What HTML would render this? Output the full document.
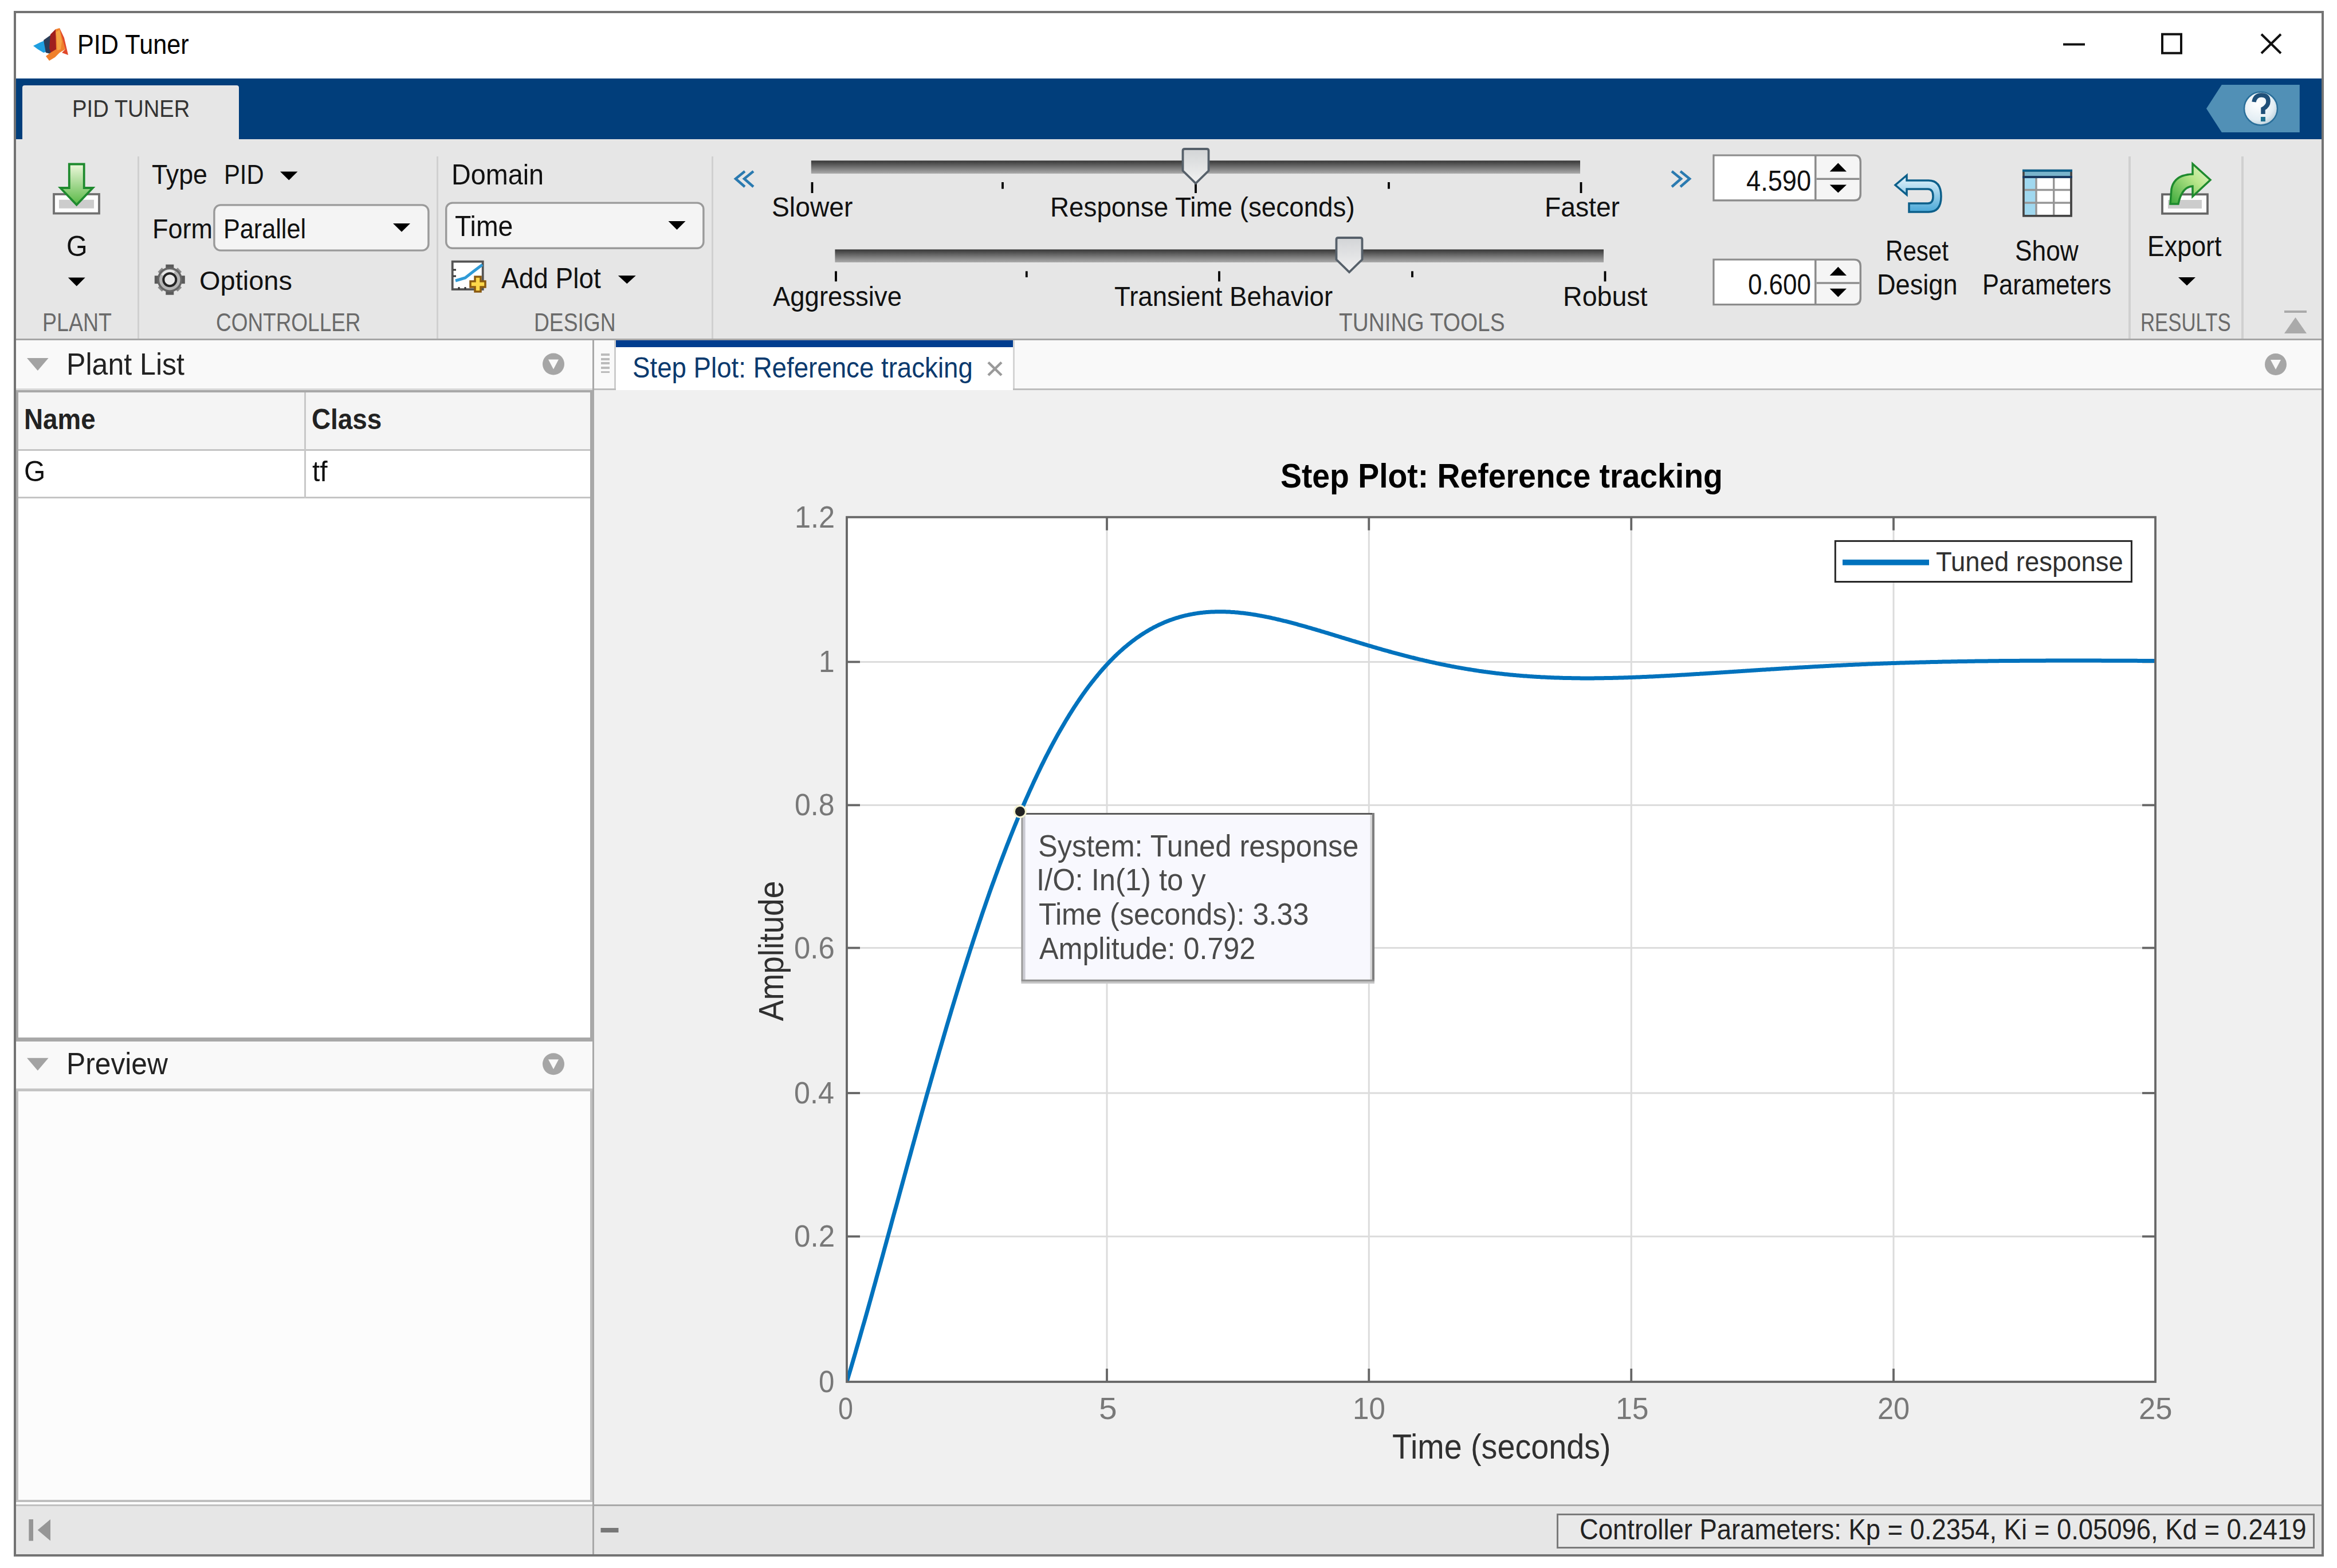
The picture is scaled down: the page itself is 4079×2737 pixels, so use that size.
<!DOCTYPE html>
<html><head><meta charset="utf-8"><style>
html,body{margin:0;padding:0;background:#fff;width:4079px;height:2737px;overflow:hidden;position:relative}
.r{position:absolute}
.t{position:absolute;white-space:pre;line-height:1;font-family:"Liberation Sans",sans-serif;transform-origin:0 0}
svg{position:absolute;left:0;top:0}
</style></head><body>
<div class="r" style="left:24.0px;top:19.0px;width:4032.0px;height:2698.0px;background:#737373;"></div><div class="r" style="left:28.0px;top:23.0px;width:4024.0px;height:114.0px;background:#ffffff;"></div><div class="r" style="left:28.0px;top:137.0px;width:4024.0px;height:105.5px;background:#013e7b;"></div><div class="r" style="left:38.5px;top:148.5px;width:378.5px;height:94.5px;background:#e6e6e6;border-radius:4px 4px 0 0"></div><div class="r" style="left:28.0px;top:242.5px;width:4024.0px;height:348.5px;background:#e6e6e6;"></div><div class="r" style="left:28.0px;top:591.0px;width:4024.0px;height:3.2px;background:#a6a6a6;"></div><div class="r" style="left:239.8px;top:272.5px;width:3.4px;height:318.5px;background:#d0d0d0;"></div><div class="r" style="left:761.8px;top:272.5px;width:3.4px;height:318.5px;background:#d0d0d0;"></div><div class="r" style="left:1241.8px;top:272.5px;width:3.4px;height:318.5px;background:#d0d0d0;"></div><div class="r" style="left:3715.3px;top:272.5px;width:3.4px;height:318.5px;background:#d0d0d0;"></div><div class="r" style="left:3912.3px;top:272.5px;width:3.4px;height:318.5px;background:#d0d0d0;"></div><div class="r" style="left:28.0px;top:594.2px;width:4024.0px;height:2118.8px;background:#f0f0f0;"></div><div class="r" style="left:28.0px;top:594.2px;width:1006.0px;height:83.8px;background:#f9f9f9;"></div><div class="r" style="left:28.0px;top:678.0px;width:1006.0px;height:3.0px;background:#d9d9d9;"></div><div class="r" style="left:28.0px;top:681.0px;width:1006.0px;height:1137.0px;background:#a8a8a8;"></div><div class="r" style="left:31.8px;top:684.8px;width:998.2px;height:1126.2px;background:#ffffff;"></div><div class="r" style="left:31.8px;top:684.8px;width:998.2px;height:98.8px;background:#f4f4f4;"></div><div class="r" style="left:31.8px;top:783.6px;width:998.2px;height:3.4px;background:#c4c4c4;"></div><div class="r" style="left:31.8px;top:866.5px;width:998.2px;height:3.5px;background:#c4c4c4;"></div><div class="r" style="left:530.5px;top:684.8px;width:3.3px;height:185.2px;background:#c8c8c8;"></div><div class="r" style="left:28.0px;top:1818.0px;width:1006.0px;height:82.0px;background:#f9f9f9;"></div><div class="r" style="left:28.0px;top:1900.0px;width:1006.0px;height:5.0px;background:#c4c4c4;"></div><div class="r" style="left:28.0px;top:1905.0px;width:1006.0px;height:716.8px;background:#bfbfbf;"></div><div class="r" style="left:31.8px;top:1905.0px;width:998.2px;height:713.0px;background:#fcfcfc;"></div><div class="r" style="left:28.0px;top:2621.8px;width:1006.0px;height:4.2px;background:#ffffff;"></div><div class="r" style="left:1034.0px;top:2626.0px;width:3018.0px;height:3.0px;background:#a8a8a8;"></div><div class="r" style="left:28.0px;top:2626.0px;width:1006.0px;height:3.0px;background:#c0c0c0;"></div><div class="r" style="left:28.0px;top:2629.0px;width:4024.0px;height:84.0px;background:#e6e6e6;"></div><div class="r" style="left:1034.0px;top:594.2px;width:3.4px;height:2118.8px;background:#a8a8a8;"></div><div class="r" style="left:1037.4px;top:594.2px;width:3014.6px;height:83.8px;background:#f9f9f9;"></div><div class="r" style="left:1037.4px;top:678.0px;width:3014.6px;height:3.0px;background:#bdbdbd;"></div><div class="r" style="left:1072.0px;top:594.2px;width:3.0px;height:83.8px;background:#cccccc;"></div><div class="r" style="left:1049.0px;top:617.0px;width:15.0px;height:3.8px;background:#bbbbbb;"></div><div class="r" style="left:1049.0px;top:624.8px;width:15.0px;height:3.8px;background:#bbbbbb;"></div><div class="r" style="left:1049.0px;top:632.4px;width:15.0px;height:3.8px;background:#bbbbbb;"></div><div class="r" style="left:1049.0px;top:640.0px;width:15.0px;height:3.8px;background:#bbbbbb;"></div><div class="r" style="left:1049.0px;top:647.6px;width:15.0px;height:3.8px;background:#bbbbbb;"></div><div class="r" style="left:1075.0px;top:594.2px;width:693.0px;height:86.8px;background:#ffffff;"></div><div class="r" style="left:1075.0px;top:594.2px;width:693.0px;height:11.4px;background:#003d8f;"></div><div class="r" style="left:1768.0px;top:594.2px;width:3.0px;height:83.8px;background:#d4d4d4;"></div><div class="r" style="left:2717.0px;top:2642.0px;width:1323.0px;height:61.0px;background:#7a7a7a;"></div><div class="r" style="left:2720.0px;top:2645.0px;width:1317.0px;height:55.0px;background:#e9e9e9;"></div>
<svg width="4079" height="2737" viewBox="0 0 4079 2737">
<rect x="3601" y="75.5" width="38" height="4" fill="#111"/><rect x="3774" y="59.7" width="33" height="33" fill="none" stroke="#111" stroke-width="4"/><path d="M3947 59.7 L3981 93 M3981 59.7 L3947 93" stroke="#111" stroke-width="4"/><polygon points="58,80 70,74 80,70 82,90 76,92 66,86" fill="#1f9fe0"/><polygon points="76,70 90,60 94,80 88,94 80,92" fill="#2a3d58"/><polygon points="88,60 97,51 100,88 90,96 86,84" fill="#a01e1e"/><polygon points="97,51 104,49 110,66 114,86 104,92 96,100 86,106 80,98 88,92 98,86" fill="#f0802c"/><polygon points="98,56 104,52 108,72 106,86 100,88" fill="#f6a244"/><polygon points="104,49 112,66 119,96 108,92 114,86 108,64" fill="#e0482a"/><polygon points="3877.8,148 4013.8,148 4013.8,231 3877.8,231 3851,189.6" fill="#5190b6"/><defs><radialGradient id="hg" cx="0.4" cy="0.35" r="0.7"><stop offset="0" stop-color="#ffffff"/><stop offset="0.7" stop-color="#e4eef4"/><stop offset="1" stop-color="#b8cdd9"/></radialGradient><linearGradient id="trk" x1="0" y1="0" x2="0" y2="1"><stop offset="0" stop-color="#363636"/><stop offset="1" stop-color="#ababab"/></linearGradient><linearGradient id="thb" x1="0" y1="0" x2="0" y2="1"><stop offset="0" stop-color="#d2d4d6"/><stop offset="1" stop-color="#f2f2f2"/></linearGradient><linearGradient id="arr" x1="0" y1="0" x2="0" y2="1"><stop offset="0" stop-color="#eef8dc"/><stop offset="1" stop-color="#58b845"/></linearGradient><linearGradient id="exa" x1="0" y1="1" x2="1" y2="0"><stop offset="0" stop-color="#3aa83a"/><stop offset="0.6" stop-color="#b8e68a"/><stop offset="1" stop-color="#e8f6d0"/></linearGradient><linearGradient id="rst" x1="0" y1="0" x2="0" y2="1"><stop offset="0" stop-color="#eaf6fc"/><stop offset="1" stop-color="#4aa8d8"/></linearGradient></defs><circle cx="3946" cy="189.5" r="29" fill="url(#hg)" stroke="#2a6f9a" stroke-width="2.5"/><path d="M3934 178 Q3936 166 3947 166 Q3959 166 3959 177 Q3959 185 3950 190 L3950 199" fill="none" stroke="#1f4f78" stroke-width="7.5"/><rect x="3946" y="204" width="8" height="8" fill="#1f6f8f"/><rect x="94" y="339" width="79" height="33.5" fill="#fdfdfd" stroke="#707070" stroke-width="3.8"/><rect x="103" y="348.7" width="61" height="15" fill="#cccccc"/><polygon points="120.8,286.5 146.7,286.5 146.7,328 162,328 133.7,357.5 105.4,328 120.8,328" fill="url(#arr)" stroke="#1e8a2e" stroke-width="3.8"/><polygon points="118.8,484.6 148.7,484.6 133.75,499.5" fill="#000"/><polygon points="489,299.6 519.5,299.6 504.25,314.5" fill="#000"/><rect x="373.9" y="357.9" width="374" height="79.2" rx="11" fill="#f4f4f4" stroke="#9a9a9a" stroke-width="3.4"/><polygon points="686,390 716,390 701.0,404.7" fill="#000"/><rect x="778.7" y="354.1" width="449.2" height="79.2" rx="11" fill="#f4f4f4" stroke="#9a9a9a" stroke-width="3.4"/><polygon points="1166.5,386 1196.5,386 1181.5,401" fill="#000"/><polygon points="1078.8,481 1109.8,481 1094.3,495.3" fill="#000"/><g transform="translate(296.3,488.2)"><rect x="-7" y="-26.5" width="14" height="10" fill="#5a5a5a" transform="rotate(0)"/><rect x="-5" y="-24.5" width="10" height="8" fill="#8a8a8a" transform="rotate(45)"/><rect x="-7" y="-26.5" width="14" height="10" fill="#5a5a5a" transform="rotate(90)"/><rect x="-5" y="-24.5" width="10" height="8" fill="#8a8a8a" transform="rotate(135)"/><rect x="-7" y="-26.5" width="14" height="10" fill="#5a5a5a" transform="rotate(180)"/><rect x="-5" y="-24.5" width="10" height="8" fill="#8a8a8a" transform="rotate(225)"/><rect x="-7" y="-26.5" width="14" height="10" fill="#5a5a5a" transform="rotate(270)"/><rect x="-5" y="-24.5" width="10" height="8" fill="#8a8a8a" transform="rotate(315)"/><circle r="20" fill="#b4b4b4" stroke="#666" stroke-width="3.5"/><path d="M-13,-8 A15,15 0 0 1 8,-13" stroke="#e8e8e8" stroke-width="4" fill="none"/><circle r="11" fill="#e9e9e9" stroke="#242424" stroke-width="4"/></g><rect x="789.7" y="456.6" width="53" height="48.5" fill="#fff" stroke="#555" stroke-width="3.8"/><path d="M795 490 L812 485 L826 474 L842 462" fill="none" stroke="#2f9ad6" stroke-width="5"/><path d="M791 471 h5 M791 482 h5 M801 505 v-4 M812 505 v-4" stroke="#333" stroke-width="3"/><path d="M829 483 h10 v8 h8 v10 h-8 v8 h-10 v-8 h-8 v-10 h8z" fill="#fdd84a" stroke="#8a5a10" stroke-width="3.5"/><path d="M1300 299 L1284 312 L1300 326 M1315 299 L1299 312 L1315 326" fill="none" stroke="#2a7ab0" stroke-width="4.5"/><path d="M2918 299 L2934 312 L2918 326 M2933 299 L2949 312 L2933 326" fill="none" stroke="#2a7ab0" stroke-width="4.5"/><rect x="1415.8" y="280.3" width="1342.2" height="22.8" fill="url(#trk)"/><rect x="1457.4" y="435.4" width="1341.6" height="22.6" fill="url(#trk)"/><rect x="1415.6" y="318" width="3.8" height="19" fill="#000"/><rect x="1748.1" y="318" width="3.8" height="11.600000000000023" fill="#000"/><rect x="2085.1" y="318" width="3.8" height="19" fill="#000"/><rect x="2422.1" y="318" width="3.8" height="11.600000000000023" fill="#000"/><rect x="2757.6" y="318" width="3.8" height="19" fill="#000"/><rect x="1457.1" y="473.4" width="3.8" height="17.900000000000034" fill="#000"/><rect x="1789.8999999999999" y="473.4" width="3.8" height="10.600000000000023" fill="#000"/><rect x="2126.1" y="473.4" width="3.8" height="17.900000000000034" fill="#000"/><rect x="2463.1" y="473.4" width="3.8" height="10.600000000000023" fill="#000"/><rect x="2799.6" y="473.4" width="3.8" height="17.900000000000034" fill="#000"/><path d="M2064.5,263 L2064.5,298 L2087,320 L2109.5,298 L2109.5,263 Q2109.5,260 2106,260 L2068,260 Q2064.5,260 2064.5,263Z" fill="url(#thb)" stroke="#56606a" stroke-width="3.8"/><path d="M2332.5,418 L2332.5,453 L2355,475 L2377.5,453 L2377.5,418 Q2377.5,415 2374,415 L2336,415 Q2332.5,415 2332.5,418Z" fill="url(#thb)" stroke="#56606a" stroke-width="3.8"/><path d="M2991 271.09999999999997 H3236 Q3247.3 271.09999999999997 3247.3 282.4 V338.5 Q3247.3 349.8 3236 349.8 H2991Z" fill="#f5f5f5" stroke="#8c8c8c" stroke-width="3.4"/><rect x="2992.7" y="272.79999999999995" width="175" height="75.30000000000003" fill="#fff"/><rect x="3167" y="271.09999999999997" width="3.5" height="78.70000000000002" fill="#8c8c8c"/><rect x="3170.5" y="310.6" width="75" height="3.4" fill="#8c8c8c"/><polygon points="3193.6,299.4 3223,299.4 3208.3,284.6" fill="#000"/><polygon points="3193.6,322.5 3223,322.5 3208.3,336.4" fill="#000"/><path d="M2991 453.09999999999997 H3236 Q3247.3 453.09999999999997 3247.3 464.4 V520.3 Q3247.3 531.5999999999999 3236 531.5999999999999 H2991Z" fill="#f5f5f5" stroke="#8c8c8c" stroke-width="3.4"/><rect x="2992.7" y="454.79999999999995" width="175" height="75.09999999999998" fill="#fff"/><rect x="3167" y="453.09999999999997" width="3.5" height="78.49999999999997" fill="#8c8c8c"/><rect x="3170.5" y="492.3" width="75" height="3.4" fill="#8c8c8c"/><polygon points="3193.6,481 3223,481 3208.3,465.8" fill="#000"/><polygon points="3193.6,503.7 3223,503.7 3208.3,518.5" fill="#000"/><path d="M3328 306 L3308 323 L3328 340 L3328 330 L3365 330 Q3374 330 3374 343 Q3374 355 3365 355 L3332 355 L3332 370 L3366 370 Q3388 370 3388 343 Q3388 315 3366 315 L3328 315Z" fill="url(#rst)" stroke="#0c5f8a" stroke-width="3.5"/><rect x="3532" y="297.8" width="83" height="79" fill="#fff" stroke="#444" stroke-width="3.8"/><rect x="3533.9" y="299.7" width="79.2" height="11" fill="#7ab4cc"/><rect x="3530" y="295.8" width="87" height="4" fill="#0c5f8a"/><rect x="3530" y="307" width="87" height="4" fill="#1a3a60"/><rect x="3533.9" y="311" width="19" height="64" fill="#a0d8ef"/><path d="M3554 311 V375 M3584.7 311 V375 M3534 331.5 H3613 M3534 354 H3613" stroke="#969696" stroke-width="3.4"/><rect x="3774" y="339.3" width="79" height="33.5" fill="#fdfdfd" stroke="#666" stroke-width="3.8"/><rect x="3784" y="349" width="59" height="15" fill="#cccccc"/><path d="M3788 356 L3790 330 Q3795 305 3827 304 L3827 286 L3858 314 L3827 343 L3827 325 Q3808 326 3802 356Z" fill="url(#exa)" stroke="#1e8a2e" stroke-width="3.5"/><polygon points="3802,484 3832,484 3817.0,498.6" fill="#000"/><rect x="3987" y="542" width="39" height="4" fill="#aaa"/><polygon points="3987,582 4026,582 4006.5,554" fill="#aaa"/><polygon points="47,625.0 84.6,625.0 65.8,647.0" fill="#a3a3a3"/><circle cx="966" cy="635.5" r="19" fill="#a6a6a6"/><polygon points="957,627.5 975,627.5 966,644.5" fill="#f9f9f9"/><polygon points="47,1846.7 84.6,1846.7 65.8,1868.7" fill="#a3a3a3"/><circle cx="966" cy="1857.2" r="19" fill="#a6a6a6"/><polygon points="957,1849.2 975,1849.2 966,1866.2" fill="#f9f9f9"/><circle cx="3972" cy="636" r="19" fill="#a6a6a6"/><polygon points="3963,628 3981,628 3972,645" fill="#f9f9f9"/><path d="M1725 632.5 L1748 655 M1748 632.5 L1725 655" stroke="#9a9a9a" stroke-width="4.5"/><rect x="50.3" y="2652" width="7.7" height="37.6" fill="#969696"/><polygon points="65.7,2670.8 88,2652 88,2689.6" fill="#969696"/><rect x="1048.5" y="2667" width="31" height="8" fill="#777"/><rect x="1478" y="902.7" width="2284" height="1509.3" fill="#fff"/><rect x="1930.5" y="902.7" width="3" height="1509.3" fill="#dcdcdc"/><rect x="2387.8" y="902.7" width="3" height="1509.3" fill="#dcdcdc"/><rect x="2845.7" y="902.7" width="3" height="1509.3" fill="#dcdcdc"/><rect x="3303.5" y="902.7" width="3" height="1509.3" fill="#dcdcdc"/><rect x="1478" y="2156.8" width="2284" height="3" fill="#dcdcdc"/><rect x="1478" y="1906.5" width="2284" height="3" fill="#dcdcdc"/><rect x="1478" y="1653.1" width="2284" height="3" fill="#dcdcdc"/><rect x="1478" y="1403.9" width="2284" height="3" fill="#dcdcdc"/><rect x="1478" y="1153.9" width="2284" height="3" fill="#dcdcdc"/><rect x="1930.1" y="2389" width="3.8" height="23" fill="#666"/><rect x="1930.1" y="902.7" width="3.8" height="23" fill="#666"/><rect x="2387.4" y="2389" width="3.8" height="23" fill="#666"/><rect x="2387.4" y="902.7" width="3.8" height="23" fill="#666"/><rect x="2845.2999999999997" y="2389" width="3.8" height="23" fill="#666"/><rect x="2845.2999999999997" y="902.7" width="3.8" height="23" fill="#666"/><rect x="3303.1" y="2389" width="3.8" height="23" fill="#666"/><rect x="3303.1" y="902.7" width="3.8" height="23" fill="#666"/><rect x="1478" y="2156.4" width="23" height="3.8" fill="#666"/><rect x="3739" y="2156.4" width="23" height="3.8" fill="#666"/><rect x="1478" y="1906.1" width="23" height="3.8" fill="#666"/><rect x="3739" y="1906.1" width="23" height="3.8" fill="#666"/><rect x="1478" y="1652.6999999999998" width="23" height="3.8" fill="#666"/><rect x="3739" y="1652.6999999999998" width="23" height="3.8" fill="#666"/><rect x="1478" y="1403.5" width="23" height="3.8" fill="#666"/><rect x="3739" y="1403.5" width="23" height="3.8" fill="#666"/><rect x="1478" y="1153.5" width="23" height="3.8" fill="#666"/><rect x="3739" y="1153.5" width="23" height="3.8" fill="#666"/><rect x="3203.3" y="944.4" width="517.1" height="71.1" fill="#fff" stroke="#262626" stroke-width="3"/><rect x="3216" y="976.8" width="151" height="9.8" fill="#0072bd"/><clipPath id="axc"><rect x="1478" y="902.7" width="2284" height="1509.3"/></clipPath><polyline points="1478.0,2412.0 1479.9,2405.6 1481.8,2399.3 1483.7,2392.9 1485.6,2386.4 1487.5,2379.9 1489.4,2373.4 1491.3,2366.9 1493.2,2360.4 1495.1,2353.8 1497.0,2347.2 1498.9,2340.6 1500.8,2334.0 1502.7,2327.3 1504.6,2320.6 1506.5,2313.9 1508.5,2307.2 1510.4,2300.5 1512.3,2293.7 1514.2,2287.0 1516.1,2280.2 1518.0,2273.4 1519.9,2266.6 1521.8,2259.7 1523.7,2252.9 1525.6,2246.0 1527.5,2239.2 1529.4,2232.3 1531.3,2225.4 1533.2,2218.5 1535.1,2211.6 1537.0,2204.7 1538.9,2197.8 1540.8,2190.8 1542.7,2183.9 1544.6,2176.9 1546.5,2170.0 1548.4,2163.0 1550.3,2156.1 1552.2,2149.1 1554.1,2142.2 1556.0,2135.2 1557.9,2128.2 1559.8,2121.2 1561.7,2114.3 1563.7,2107.3 1565.6,2100.3 1567.5,2093.4 1569.4,2086.4 1571.3,2079.4 1573.2,2072.5 1575.1,2065.5 1577.0,2058.6 1578.9,2051.6 1580.8,2044.7 1582.7,2037.7 1584.6,2030.8 1586.5,2023.9 1588.4,2017.0 1590.3,2010.0 1592.2,2003.1 1594.1,1996.2 1596.0,1989.4 1597.9,1982.5 1599.8,1975.6 1601.7,1968.8 1603.6,1961.9 1605.5,1955.1 1607.4,1948.2 1609.3,1941.4 1611.2,1934.6 1613.1,1927.9 1615.0,1921.1 1616.9,1914.3 1618.8,1907.6 1620.8,1900.8 1622.7,1894.1 1624.6,1887.4 1626.5,1880.8 1628.4,1874.1 1630.3,1867.4 1632.2,1860.8 1634.1,1854.2 1636.0,1847.6 1637.9,1841.0 1639.8,1834.4 1641.7,1827.9 1643.6,1821.4 1645.5,1814.9 1647.4,1808.4 1649.3,1801.9 1651.2,1795.5 1653.1,1789.1 1655.0,1782.7 1656.9,1776.3 1658.8,1769.9 1660.7,1763.6 1662.6,1757.3 1664.5,1751.0 1666.4,1744.7 1668.3,1738.5 1670.2,1732.3 1672.1,1726.1 1674.0,1719.9 1675.9,1713.7 1677.8,1707.6 1679.8,1701.5 1681.7,1695.4 1683.6,1689.4 1685.5,1683.4 1687.4,1677.4 1689.3,1671.4 1691.2,1665.5 1693.1,1659.5 1695.0,1653.6 1696.9,1647.8 1698.8,1641.9 1700.7,1636.1 1702.6,1630.3 1704.5,1624.6 1706.4,1618.9 1708.3,1613.2 1710.2,1607.5 1712.1,1601.8 1714.0,1596.2 1715.9,1590.6 1717.8,1585.1 1719.7,1579.6 1721.6,1574.1 1723.5,1568.6 1725.4,1563.2 1727.3,1557.7 1729.2,1552.4 1731.1,1547.0 1733.0,1541.7 1735.0,1536.4 1736.9,1531.1 1738.8,1525.9 1740.7,1520.7 1742.6,1515.6 1744.5,1510.4 1746.4,1505.3 1748.3,1500.2 1750.2,1495.2 1752.1,1490.2 1754.0,1485.2 1755.9,1480.3 1757.8,1475.3 1759.7,1470.4 1761.6,1465.6 1763.5,1460.8 1765.4,1456.0 1767.3,1451.2 1769.2,1446.5 1771.1,1441.8 1773.0,1437.1 1774.9,1432.5 1776.8,1427.9 1778.7,1423.3 1780.6,1418.8 1782.5,1414.3 1784.4,1409.8 1786.3,1405.4 1788.2,1401.0 1790.1,1396.6 1792.0,1392.3 1794.0,1388.0 1795.9,1383.7 1797.8,1379.4 1799.7,1375.2 1801.6,1371.1 1803.5,1366.9 1805.4,1362.8 1807.3,1358.7 1809.2,1354.7 1811.1,1350.6 1813.0,1346.7 1814.9,1342.7 1816.8,1338.8 1818.7,1334.9 1820.6,1331.1 1822.5,1327.2 1824.4,1323.4 1826.3,1319.7 1828.2,1316.0 1830.1,1312.3 1832.0,1308.6 1833.9,1305.0 1835.8,1301.4 1837.7,1297.8 1839.6,1294.3 1841.5,1290.8 1843.4,1287.3 1845.3,1283.9 1847.2,1280.5 1849.2,1277.1 1851.1,1273.8 1853.0,1270.5 1854.9,1267.2 1856.8,1263.9 1858.7,1260.7 1860.6,1257.5 1862.5,1254.4 1864.4,1251.3 1866.3,1248.2 1868.2,1245.1 1870.1,1242.1 1872.0,1239.1 1873.9,1236.1 1875.8,1233.2 1877.7,1230.3 1879.6,1227.4 1881.5,1224.6 1883.4,1221.8 1885.3,1219.0 1887.2,1216.2 1889.1,1213.5 1891.0,1210.8 1892.9,1208.2 1894.8,1205.5 1896.7,1202.9 1898.6,1200.4 1900.5,1197.8 1902.4,1195.3 1904.3,1192.8 1906.2,1190.4 1908.2,1188.0 1910.1,1185.6 1912.0,1183.2 1913.9,1180.9 1915.8,1178.5 1917.7,1176.3 1919.6,1174.0 1921.5,1171.8 1923.4,1169.6 1925.3,1167.4 1927.2,1165.3 1929.1,1163.2 1931.0,1161.1 1932.9,1159.0 1934.8,1157.0 1936.7,1155.0 1938.6,1153.0 1940.5,1151.1 1942.4,1149.2 1944.3,1147.3 1946.2,1145.4 1948.1,1143.6 1950.0,1141.7 1951.9,1140.0 1953.8,1138.2 1955.7,1136.5 1957.6,1134.8 1959.5,1133.1 1961.4,1131.4 1963.3,1129.8 1965.3,1128.2 1967.2,1126.6 1969.1,1125.0 1971.0,1123.5 1972.9,1122.0 1974.8,1120.5 1976.7,1119.0 1978.6,1117.6 1980.5,1116.2 1982.4,1114.8 1984.3,1113.4 1986.2,1112.1 1988.1,1110.8 1990.0,1109.5 1991.9,1108.2 1993.8,1107.0 1995.7,1105.8 1997.6,1104.6 1999.5,1103.4 2001.4,1102.2 2003.3,1101.1 2005.2,1100.0 2007.1,1098.9 2009.0,1097.8 2010.9,1096.8 2012.8,1095.7 2014.7,1094.7 2016.6,1093.8 2018.5,1092.8 2020.5,1091.9 2022.4,1090.9 2024.3,1090.0 2026.2,1089.2 2028.1,1088.3 2030.0,1087.5 2031.9,1086.6 2033.8,1085.8 2035.7,1085.1 2037.6,1084.3 2039.5,1083.6 2041.4,1082.8 2043.3,1082.1 2045.2,1081.5 2047.1,1080.8 2049.0,1080.2 2050.9,1079.5 2052.8,1078.9 2054.7,1078.3 2056.6,1077.8 2058.5,1077.2 2060.4,1076.7 2062.3,1076.1 2064.2,1075.6 2066.1,1075.1 2068.0,1074.7 2069.9,1074.2 2071.8,1073.8 2073.7,1073.4 2075.6,1073.0 2077.6,1072.6 2079.5,1072.2 2081.4,1071.9 2083.3,1071.5 2085.2,1071.2 2087.1,1070.9 2089.0,1070.6 2090.9,1070.3 2092.8,1070.1 2094.7,1069.8 2096.6,1069.6 2098.5,1069.4 2100.4,1069.1 2102.3,1069.0 2104.2,1068.8 2106.1,1068.6 2108.0,1068.5 2109.9,1068.3 2111.8,1068.2 2113.7,1068.1 2115.6,1068.0 2117.5,1067.9 2119.4,1067.9 2121.3,1067.8 2123.2,1067.8 2125.1,1067.7 2127.0,1067.7 2128.9,1067.7 2130.8,1067.7 2132.7,1067.7 2134.7,1067.7 2136.6,1067.8 2138.5,1067.8 2140.4,1067.9 2142.3,1068.0 2144.2,1068.1 2146.1,1068.1 2148.0,1068.3 2149.9,1068.4 2151.8,1068.5 2153.7,1068.6 2155.6,1068.8 2157.5,1068.9 2159.4,1069.1 2161.3,1069.3 2163.2,1069.5 2165.1,1069.7 2167.0,1069.9 2168.9,1070.1 2170.8,1070.3 2172.7,1070.5 2174.6,1070.8 2176.5,1071.0 2178.4,1071.3 2180.3,1071.6 2182.2,1071.8 2184.1,1072.1 2186.0,1072.4 2187.9,1072.7 2189.8,1073.0 2191.8,1073.3 2193.7,1073.6 2195.6,1074.0 2197.5,1074.3 2199.4,1074.7 2201.3,1075.0 2203.2,1075.4 2205.1,1075.7 2207.0,1076.1 2208.9,1076.5 2210.8,1076.9 2212.7,1077.2 2214.6,1077.6 2216.5,1078.0 2218.4,1078.4 2220.3,1078.9 2222.2,1079.3 2224.1,1079.7 2226.0,1080.1 2227.9,1080.6 2229.8,1081.0 2231.7,1081.5 2233.6,1081.9 2235.5,1082.4 2237.4,1082.8 2239.3,1083.3 2241.2,1083.8 2243.1,1084.2 2245.0,1084.7 2246.9,1085.2 2248.8,1085.7 2250.8,1086.2 2252.7,1086.7 2254.6,1087.2 2256.5,1087.7 2258.4,1088.2 2260.3,1088.7 2262.2,1089.2 2264.1,1089.7 2266.0,1090.3 2267.9,1090.8 2269.8,1091.3 2271.7,1091.8 2273.6,1092.4 2275.5,1092.9 2277.4,1093.4 2279.3,1094.0 2281.2,1094.5 2283.1,1095.1 2285.0,1095.6 2286.9,1096.2 2288.8,1096.7 2290.7,1097.3 2292.6,1097.8 2294.5,1098.4 2296.4,1099.0 2298.3,1099.5 2300.2,1100.1 2302.1,1100.6 2304.0,1101.2 2305.9,1101.8 2307.9,1102.4 2309.8,1102.9 2311.7,1103.5 2313.6,1104.1 2315.5,1104.6 2317.4,1105.2 2319.3,1105.8 2321.2,1106.4 2323.1,1107.0 2325.0,1107.5 2326.9,1108.1 2328.8,1108.7 2330.7,1109.3 2332.6,1109.9 2334.5,1110.4 2336.4,1111.0 2338.3,1111.6 2340.2,1112.2 2342.1,1112.8 2344.0,1113.3 2345.9,1113.9 2347.8,1114.5 2349.7,1115.1 2351.6,1115.7 2353.5,1116.2 2355.4,1116.8 2357.3,1117.4 2359.2,1118.0 2361.1,1118.6 2363.1,1119.1 2365.0,1119.7 2366.9,1120.3 2368.8,1120.9 2370.7,1121.4 2372.6,1122.0 2374.5,1122.6 2376.4,1123.2 2378.3,1123.7 2380.2,1124.3 2382.1,1124.9 2384.0,1125.4 2385.9,1126.0 2387.8,1126.6 2389.7,1127.1 2391.6,1127.7 2393.5,1128.2 2395.4,1128.8 2397.3,1129.4 2399.2,1129.9 2401.1,1130.5 2403.0,1131.0 2404.9,1131.6 2406.8,1132.1 2408.7,1132.7 2410.6,1133.2 2412.5,1133.8 2414.4,1134.3 2416.3,1134.8 2418.2,1135.4 2420.2,1135.9 2422.1,1136.4 2424.0,1137.0 2425.9,1137.5 2427.8,1138.0 2429.7,1138.6 2431.6,1139.1 2433.5,1139.6 2435.4,1140.1 2437.3,1140.6 2439.2,1141.1 2441.1,1141.6 2443.0,1142.2 2444.9,1142.7 2446.8,1143.2 2448.7,1143.7 2450.6,1144.2 2452.5,1144.7 2454.4,1145.1 2456.3,1145.6 2458.2,1146.1 2460.1,1146.6 2462.0,1147.1 2463.9,1147.6 2465.8,1148.0 2467.7,1148.5 2469.6,1149.0 2471.5,1149.5 2473.4,1149.9 2475.3,1150.4 2477.2,1150.8 2479.2,1151.3 2481.1,1151.7 2483.0,1152.2 2484.9,1152.6 2486.8,1153.1 2488.7,1153.5 2490.6,1154.0 2492.5,1154.4 2494.4,1154.8 2496.3,1155.3 2498.2,1155.7 2500.1,1156.1 2502.0,1156.5 2503.9,1156.9 2505.8,1157.3 2507.7,1157.8 2509.6,1158.2 2511.5,1158.6 2513.4,1159.0 2515.3,1159.4 2517.2,1159.8 2519.1,1160.1 2521.0,1160.5 2522.9,1160.9 2524.8,1161.3 2526.7,1161.7 2528.6,1162.0 2530.5,1162.4 2532.4,1162.8 2534.3,1163.2 2536.3,1163.5 2538.2,1163.9 2540.1,1164.2 2542.0,1164.6 2543.9,1164.9 2545.8,1165.3 2547.7,1165.6 2549.6,1165.9 2551.5,1166.3 2553.4,1166.6 2555.3,1166.9 2557.2,1167.3 2559.1,1167.6 2561.0,1167.9 2562.9,1168.2 2564.8,1168.5 2566.7,1168.8 2568.6,1169.1 2570.5,1169.4 2572.4,1169.7 2574.3,1170.0 2576.2,1170.3 2578.1,1170.6 2580.0,1170.9 2581.9,1171.2 2583.8,1171.4 2585.7,1171.7 2587.6,1172.0 2589.5,1172.3 2591.4,1172.5 2593.4,1172.8 2595.3,1173.0 2597.2,1173.3 2599.1,1173.5 2601.0,1173.8 2602.9,1174.0 2604.8,1174.3 2606.7,1174.5 2608.6,1174.7 2610.5,1175.0 2612.4,1175.2 2614.3,1175.4 2616.2,1175.6 2618.1,1175.9 2620.0,1176.1 2621.9,1176.3 2623.8,1176.5 2625.7,1176.7 2627.6,1176.9 2629.5,1177.1 2631.4,1177.3 2633.3,1177.5 2635.2,1177.7 2637.1,1177.9 2639.0,1178.0 2640.9,1178.2 2642.8,1178.4 2644.7,1178.6 2646.6,1178.8 2648.6,1178.9 2650.5,1179.1 2652.4,1179.2 2654.3,1179.4 2656.2,1179.6 2658.1,1179.7 2660.0,1179.9 2661.9,1180.0 2663.8,1180.1 2665.7,1180.3 2667.6,1180.4 2669.5,1180.6 2671.4,1180.7 2673.3,1180.8 2675.2,1180.9 2677.1,1181.1 2679.0,1181.2 2680.9,1181.3 2682.8,1181.4 2684.7,1181.5 2686.6,1181.6 2688.5,1181.7 2690.4,1181.9 2692.3,1182.0 2694.2,1182.0 2696.1,1182.1 2698.0,1182.2 2699.9,1182.3 2701.8,1182.4 2703.7,1182.5 2705.7,1182.6 2707.6,1182.7 2709.5,1182.7 2711.4,1182.8 2713.3,1182.9 2715.2,1182.9 2717.1,1183.0 2719.0,1183.1 2720.9,1183.1 2722.8,1183.2 2724.7,1183.3 2726.6,1183.3 2728.5,1183.4 2730.4,1183.4 2732.3,1183.5 2734.2,1183.5 2736.1,1183.5 2738.0,1183.6 2739.9,1183.6 2741.8,1183.6 2743.7,1183.7 2745.6,1183.7 2747.5,1183.7 2749.4,1183.8 2751.3,1183.8 2753.2,1183.8 2755.1,1183.8 2757.0,1183.8 2758.9,1183.9 2760.8,1183.9 2762.8,1183.9 2764.7,1183.9 2766.6,1183.9 2768.5,1183.9 2770.4,1183.9 2772.3,1183.9 2774.2,1183.9 2776.1,1183.9 2778.0,1183.9 2779.9,1183.9 2781.8,1183.9 2783.7,1183.8 2785.6,1183.8 2787.5,1183.8 2789.4,1183.8 2791.3,1183.8 2793.2,1183.8 2795.1,1183.7 2797.0,1183.7 2798.9,1183.7 2800.8,1183.6 2802.7,1183.6 2804.6,1183.6 2806.5,1183.5 2808.4,1183.5 2810.3,1183.5 2812.2,1183.4 2814.1,1183.4 2816.0,1183.3 2817.9,1183.3 2819.8,1183.3 2821.8,1183.2 2823.7,1183.2 2825.6,1183.1 2827.5,1183.1 2829.4,1183.0 2831.3,1182.9 2833.2,1182.9 2835.1,1182.8 2837.0,1182.8 2838.9,1182.7 2840.8,1182.7 2842.7,1182.6 2844.6,1182.5 2846.5,1182.5 2848.4,1182.4 2850.3,1182.3 2852.2,1182.2 2854.1,1182.2 2856.0,1182.1 2857.9,1182.0 2859.8,1182.0 2861.7,1181.9 2863.6,1181.8 2865.5,1181.7 2867.4,1181.6 2869.3,1181.6 2871.2,1181.5 2873.1,1181.4 2875.0,1181.3 2876.9,1181.2 2878.9,1181.1 2880.8,1181.0 2882.7,1181.0 2884.6,1180.9 2886.5,1180.8 2888.4,1180.7 2890.3,1180.6 2892.2,1180.5 2894.1,1180.4 2896.0,1180.3 2897.9,1180.2 2899.8,1180.1 2901.7,1180.0 2903.6,1179.9 2905.5,1179.8 2907.4,1179.7 2909.3,1179.6 2911.2,1179.5 2913.1,1179.4 2915.0,1179.3 2916.9,1179.2 2918.8,1179.1 2920.7,1179.0 2922.6,1178.9 2924.5,1178.8 2926.4,1178.7 2928.3,1178.5 2930.2,1178.4 2932.1,1178.3 2934.1,1178.2 2936.0,1178.1 2937.9,1178.0 2939.8,1177.9 2941.7,1177.8 2943.6,1177.7 2945.5,1177.5 2947.4,1177.4 2949.3,1177.3 2951.2,1177.2 2953.1,1177.1 2955.0,1177.0 2956.9,1176.8 2958.8,1176.7 2960.7,1176.6 2962.6,1176.5 2964.5,1176.4 2966.4,1176.3 2968.3,1176.1 2970.2,1176.0 2972.1,1175.9 2974.0,1175.8 2975.9,1175.7 2977.8,1175.5 2979.7,1175.4 2981.6,1175.3 2983.5,1175.2 2985.4,1175.0 2987.3,1174.9 2989.2,1174.8 2991.2,1174.7 2993.1,1174.6 2995.0,1174.4 2996.9,1174.3 2998.8,1174.2 3000.7,1174.1 3002.6,1173.9 3004.5,1173.8 3006.4,1173.7 3008.3,1173.6 3010.2,1173.4 3012.1,1173.3 3014.0,1173.2 3015.9,1173.1 3017.8,1172.9 3019.7,1172.8 3021.6,1172.7 3023.5,1172.6 3025.4,1172.4 3027.3,1172.3 3029.2,1172.2 3031.1,1172.1 3033.0,1171.9 3034.9,1171.8 3036.8,1171.7 3038.7,1171.6 3040.6,1171.4 3042.5,1171.3 3044.4,1171.2 3046.3,1171.1 3048.2,1170.9 3050.2,1170.8 3052.1,1170.7 3054.0,1170.6 3055.9,1170.4 3057.8,1170.3 3059.7,1170.2 3061.6,1170.1 3063.5,1170.0 3065.4,1169.8 3067.3,1169.7 3069.2,1169.6 3071.1,1169.5 3073.0,1169.3 3074.9,1169.2 3076.8,1169.1 3078.7,1169.0 3080.6,1168.9 3082.5,1168.7 3084.4,1168.6 3086.3,1168.5 3088.2,1168.4 3090.1,1168.2 3092.0,1168.1 3093.9,1168.0 3095.8,1167.9 3097.7,1167.8 3099.6,1167.7 3101.5,1167.5 3103.4,1167.4 3105.3,1167.3 3107.3,1167.2 3109.2,1167.1 3111.1,1166.9 3113.0,1166.8 3114.9,1166.7 3116.8,1166.6 3118.7,1166.5 3120.6,1166.4 3122.5,1166.3 3124.4,1166.1 3126.3,1166.0 3128.2,1165.9 3130.1,1165.8 3132.0,1165.7 3133.9,1165.6 3135.8,1165.5 3137.7,1165.3 3139.6,1165.2 3141.5,1165.1 3143.4,1165.0 3145.3,1164.9 3147.2,1164.8 3149.1,1164.7 3151.0,1164.6 3152.9,1164.5 3154.8,1164.4 3156.7,1164.3 3158.6,1164.2 3160.5,1164.0 3162.4,1163.9 3164.4,1163.8 3166.3,1163.7 3168.2,1163.6 3170.1,1163.5 3172.0,1163.4 3173.9,1163.3 3175.8,1163.2 3177.7,1163.1 3179.6,1163.0 3181.5,1162.9 3183.4,1162.8 3185.3,1162.7 3187.2,1162.6 3189.1,1162.5 3191.0,1162.4 3192.9,1162.3 3194.8,1162.2 3196.7,1162.1 3198.6,1162.0 3200.5,1161.9 3202.4,1161.8 3204.3,1161.7 3206.2,1161.6 3208.1,1161.5 3210.0,1161.5 3211.9,1161.4 3213.8,1161.3 3215.7,1161.2 3217.6,1161.1 3219.6,1161.0 3221.5,1160.9 3223.4,1160.8 3225.3,1160.7 3227.2,1160.6 3229.1,1160.6 3231.0,1160.5 3232.9,1160.4 3234.8,1160.3 3236.7,1160.2 3238.6,1160.1 3240.5,1160.0 3242.4,1160.0 3244.3,1159.9 3246.2,1159.8 3248.1,1159.7 3250.0,1159.6 3251.9,1159.5 3253.8,1159.5 3255.7,1159.4 3257.6,1159.3 3259.5,1159.2 3261.4,1159.1 3263.3,1159.1 3265.2,1159.0 3267.1,1158.9 3269.0,1158.8 3270.9,1158.8 3272.8,1158.7 3274.7,1158.6 3276.7,1158.5 3278.6,1158.5 3280.5,1158.4 3282.4,1158.3 3284.3,1158.3 3286.2,1158.2 3288.1,1158.1 3290.0,1158.0 3291.9,1158.0 3293.8,1157.9 3295.7,1157.8 3297.6,1157.8 3299.5,1157.7 3301.4,1157.6 3303.3,1157.6 3305.2,1157.5 3307.1,1157.4 3309.0,1157.4 3310.9,1157.3 3312.8,1157.3 3314.7,1157.2 3316.6,1157.1 3318.5,1157.1 3320.4,1157.0 3322.3,1156.9 3324.2,1156.9 3326.1,1156.8 3328.0,1156.8 3329.9,1156.7 3331.8,1156.7 3333.8,1156.6 3335.7,1156.5 3337.6,1156.5 3339.5,1156.4 3341.4,1156.4 3343.3,1156.3 3345.2,1156.3 3347.1,1156.2 3349.0,1156.2 3350.9,1156.1 3352.8,1156.1 3354.7,1156.0 3356.6,1156.0 3358.5,1155.9 3360.4,1155.9 3362.3,1155.8 3364.2,1155.8 3366.1,1155.7 3368.0,1155.7 3369.9,1155.6 3371.8,1155.6 3373.7,1155.5 3375.6,1155.5 3377.5,1155.4 3379.4,1155.4 3381.3,1155.4 3383.2,1155.3 3385.1,1155.3 3387.0,1155.2 3388.9,1155.2 3390.8,1155.1 3392.8,1155.1 3394.7,1155.1 3396.6,1155.0 3398.5,1155.0 3400.4,1154.9 3402.3,1154.9 3404.2,1154.9 3406.1,1154.8 3408.0,1154.8 3409.9,1154.8 3411.8,1154.7 3413.7,1154.7 3415.6,1154.7 3417.5,1154.6 3419.4,1154.6 3421.3,1154.6 3423.2,1154.5 3425.1,1154.5 3427.0,1154.5 3428.9,1154.4 3430.8,1154.4 3432.7,1154.4 3434.6,1154.3 3436.5,1154.3 3438.4,1154.3 3440.3,1154.2 3442.2,1154.2 3444.1,1154.2 3446.0,1154.2 3447.9,1154.1 3449.9,1154.1 3451.8,1154.1 3453.7,1154.1 3455.6,1154.0 3457.5,1154.0 3459.4,1154.0 3461.3,1154.0 3463.2,1153.9 3465.1,1153.9 3467.0,1153.9 3468.9,1153.9 3470.8,1153.8 3472.7,1153.8 3474.6,1153.8 3476.5,1153.8 3478.4,1153.7 3480.3,1153.7 3482.2,1153.7 3484.1,1153.7 3486.0,1153.7 3487.9,1153.7 3489.8,1153.6 3491.7,1153.6 3493.6,1153.6 3495.5,1153.6 3497.4,1153.6 3499.3,1153.5 3501.2,1153.5 3503.1,1153.5 3505.1,1153.5 3507.0,1153.5 3508.9,1153.5 3510.8,1153.5 3512.7,1153.4 3514.6,1153.4 3516.5,1153.4 3518.4,1153.4 3520.3,1153.4 3522.2,1153.4 3524.1,1153.4 3526.0,1153.3 3527.9,1153.3 3529.8,1153.3 3531.7,1153.3 3533.6,1153.3 3535.5,1153.3 3537.4,1153.3 3539.3,1153.3 3541.2,1153.3 3543.1,1153.3 3545.0,1153.2 3546.9,1153.2 3548.8,1153.2 3550.7,1153.2 3552.6,1153.2 3554.5,1153.2 3556.4,1153.2 3558.3,1153.2 3560.2,1153.2 3562.2,1153.2 3564.1,1153.2 3566.0,1153.2 3567.9,1153.2 3569.8,1153.2 3571.7,1153.1 3573.6,1153.1 3575.5,1153.1 3577.4,1153.1 3579.3,1153.1 3581.2,1153.1 3583.1,1153.1 3585.0,1153.1 3586.9,1153.1 3588.8,1153.1 3590.7,1153.1 3592.6,1153.1 3594.5,1153.1 3596.4,1153.1 3598.3,1153.1 3600.2,1153.1 3602.1,1153.1 3604.0,1153.1 3605.9,1153.1 3607.8,1153.1 3609.7,1153.1 3611.6,1153.1 3613.5,1153.1 3615.4,1153.1 3617.3,1153.1 3619.2,1153.1 3621.2,1153.1 3623.1,1153.1 3625.0,1153.1 3626.9,1153.1 3628.8,1153.1 3630.7,1153.1 3632.6,1153.1 3634.5,1153.1 3636.4,1153.1 3638.3,1153.1 3640.2,1153.1 3642.1,1153.1 3644.0,1153.1 3645.9,1153.1 3647.8,1153.1 3649.7,1153.1 3651.6,1153.1 3653.5,1153.1 3655.4,1153.1 3657.3,1153.1 3659.2,1153.1 3661.1,1153.1 3663.0,1153.1 3664.9,1153.1 3666.8,1153.1 3668.7,1153.2 3670.6,1153.2 3672.5,1153.2 3674.4,1153.2 3676.3,1153.2 3678.3,1153.2 3680.2,1153.2 3682.1,1153.2 3684.0,1153.2 3685.9,1153.2 3687.8,1153.2 3689.7,1153.2 3691.6,1153.2 3693.5,1153.2 3695.4,1153.2 3697.3,1153.2 3699.2,1153.2 3701.1,1153.2 3703.0,1153.3 3704.9,1153.3 3706.8,1153.3 3708.7,1153.3 3710.6,1153.3 3712.5,1153.3 3714.4,1153.3 3716.3,1153.3 3718.2,1153.3 3720.1,1153.3 3722.0,1153.3 3723.9,1153.3 3725.8,1153.3 3727.7,1153.3 3729.6,1153.3 3731.5,1153.4 3733.4,1153.4 3735.4,1153.4 3737.3,1153.4 3739.2,1153.4 3741.1,1153.4 3743.0,1153.4 3744.9,1153.4 3746.8,1153.4 3748.7,1153.4 3750.6,1153.4 3752.5,1153.4 3754.4,1153.5 3756.3,1153.5 3758.2,1153.5 3760.1,1153.5 3762.0,1153.5" fill="none" stroke="#0072bd" stroke-width="7" stroke-linejoin="round" clip-path="url(#axc)"/><rect x="1478" y="902.7" width="2284" height="1509.3" fill="none" stroke="#666" stroke-width="3.8"/><rect x="1782.4" y="1419" width="616.6" height="297.8" fill="#f8f8fe"/><rect x="1782.4" y="1419" width="616.6" height="3" fill="#5a5a5a"/><rect x="1782.4" y="1422" width="3.3" height="288" fill="#9a9a9a"/><rect x="1785.7" y="1422" width="3.9" height="288" fill="#cacad2"/><rect x="2391.5" y="1422" width="3.5" height="288" fill="#d4d4d4"/><rect x="2395" y="1419" width="4" height="294" fill="#7f7f7f"/><rect x="1782.4" y="1709.8" width="616.6" height="3.2" fill="#929292"/><rect x="1782.4" y="1713" width="616.6" height="3.8" fill="#c4c4c4"/><circle cx="1780.4" cy="1416.5" r="10" fill="#222" stroke="#f4f2d0" stroke-width="3"/>
</svg>
<div class="t" style="left:135.4px;top:54.4px;font-size:47.97px;color:#000;transform:scaleX(0.9016)">PID Tuner</div><div class="t" style="left:125.8px;top:168.2px;font-size:42.88px;color:#333;transform:scaleX(0.8920)">PID TUNER</div><div class="t" style="left:115.6px;top:404.7px;font-size:49.42px;color:#111;transform:scaleX(0.9521)">G</div><div class="t" style="left:73.9px;top:542.1px;font-size:43.60px;color:#6a6a6a;transform:scaleX(0.8607)">PLANT</div><div class="t" style="left:265.4px;top:280.3px;font-size:48.84px;color:#111;transform:scaleX(0.9164)">Type</div><div class="t" style="left:391.1px;top:280.3px;font-size:48.84px;color:#111;transform:scaleX(0.8557)">PID</div><div class="t" style="left:265.8px;top:375.1px;font-size:48.98px;color:#111;transform:scaleX(0.9175)">Form</div><div class="t" style="left:390.4px;top:375.1px;font-size:48.84px;color:#111;transform:scaleX(0.8846)">Parallel</div><div class="t" style="left:347.6px;top:466.6px;font-size:46.51px;color:#111;transform:scaleX(1.0101)">Options</div><div class="t" style="left:377.2px;top:542.1px;font-size:43.60px;color:#6a6a6a;transform:scaleX(0.8476)">CONTROLLER</div><div class="t" style="left:787.8px;top:280.2px;font-size:49.42px;color:#111;transform:scaleX(0.9462)">Domain</div><div class="t" style="left:794.3px;top:370.8px;font-size:49.85px;color:#111;transform:scaleX(0.9310)">Time</div><div class="t" style="left:875.4px;top:461.8px;font-size:49.85px;color:#111;transform:scaleX(0.9220)">Add Plot</div><div class="t" style="left:931.9px;top:542.1px;font-size:43.60px;color:#6a6a6a;transform:scaleX(0.8536)">DESIGN</div><div class="t" style="left:1346.7px;top:337.3px;font-size:48.55px;color:#111;transform:scaleX(0.9533)">Slower</div><div class="t" style="left:1832.7px;top:337.3px;font-size:48.55px;color:#111;transform:scaleX(0.9428)">Response Time (seconds)</div><div class="t" style="left:2695.8px;top:337.3px;font-size:48.55px;color:#111;transform:scaleX(0.9520)">Faster</div><div class="t" style="left:1348.7px;top:492.6px;font-size:48.55px;color:#111;transform:scaleX(0.9366)">Aggressive</div><div class="t" style="left:1944.6px;top:492.6px;font-size:48.55px;color:#111;transform:scaleX(0.9396)">Transient Behavior</div><div class="t" style="left:2727.9px;top:492.6px;font-size:48.55px;color:#111;transform:scaleX(0.9592)">Robust</div><div class="t" style="left:2337.1px;top:542.1px;font-size:43.60px;color:#6a6a6a;transform:scaleX(0.8897)">TUNING TOOLS</div><div class="t" style="left:3048.0px;top:291.5px;font-size:49.71px;color:#111;transform:scaleX(0.9093)">4.590</div><div class="t" style="left:3051.2px;top:473.2px;font-size:49.13px;color:#111;transform:scaleX(0.8931)">0.600</div><div class="t" style="left:3291.0px;top:413.2px;font-size:49.42px;color:#111;transform:scaleX(0.8519)">Reset</div><div class="t" style="left:3276.3px;top:471.9px;font-size:50.87px;color:#111;transform:scaleX(0.8876)">Design</div><div class="t" style="left:3517.0px;top:413.2px;font-size:49.42px;color:#111;transform:scaleX(0.8966)">Show</div><div class="t" style="left:3460.4px;top:471.9px;font-size:50.87px;color:#111;transform:scaleX(0.8564)">Parameters</div><div class="t" style="left:3747.9px;top:404.9px;font-size:50.87px;color:#111;transform:scaleX(0.8804)">Export</div><div class="t" style="left:3735.8px;top:542.1px;font-size:43.60px;color:#6a6a6a;transform:scaleX(0.7972)">RESULTS</div><div class="t" style="left:115.9px;top:609.0px;font-size:53.20px;color:#222;transform:scaleX(0.9416)">Plant List</div><div class="t" style="left:41.6px;top:707.2px;font-size:49.42px;color:#222;font-weight:700;transform:scaleX(0.9259)">Name</div><div class="t" style="left:544.2px;top:707.2px;font-size:49.42px;color:#222;font-weight:700;transform:scaleX(0.9275)">Class</div><div class="t" style="left:42.3px;top:798.2px;font-size:49.42px;color:#111;transform:scaleX(0.9707)">G</div><div class="t" style="left:545.3px;top:798.2px;font-size:49.42px;color:#111;transform:scaleX(0.9698)">tf</div><div class="t" style="left:115.9px;top:1829.9px;font-size:54.51px;color:#222;transform:scaleX(0.9127)">Preview</div><div class="t" style="left:1103.9px;top:617.2px;font-size:49.42px;color:#0b3a6e;transform:scaleX(0.9241)">Step Plot: Reference tracking</div><div class="t" style="left:2757.2px;top:2644.7px;font-size:49.42px;color:#222;transform:scaleX(0.9191)">Controller Parameters: Kp = 0.2354, Ki = 0.05096, Kd = 0.2419</div><div class="t" style="left:2235.3px;top:802.3px;font-size:58.43px;color:#000;font-weight:700;transform:scaleX(0.9471)">Step Plot: Reference tracking</div><div class="t" style="left:3379.0px;top:957.4px;font-size:47.67px;color:#303030;transform:scaleX(0.9538)">Tuned response</div><div class="t" style="left:2429.5px;top:2495.3px;font-size:61.05px;color:#303030;transform:scaleX(0.9117)">Time (seconds)</div><div class="t" style="left:1429.0px;top:2385.0px;font-size:53.78px;color:#787878;transform:scaleX(0.9151)">0</div><div class="t" style="left:1386.0px;top:2131.3px;font-size:53.78px;color:#787878;transform:scaleX(0.9512)">0.2</div><div class="t" style="left:1386.0px;top:1881.0px;font-size:53.78px;color:#787878;transform:scaleX(0.9350)">0.4</div><div class="t" style="left:1386.0px;top:1627.6px;font-size:53.78px;color:#787878;transform:scaleX(0.9457)">0.6</div><div class="t" style="left:1387.0px;top:1378.4px;font-size:53.78px;color:#787878;transform:scaleX(0.9315)">0.8</div><div class="t" style="left:1429.3px;top:1128.4px;font-size:53.78px;color:#787878;transform:scaleX(0.9244)">1</div><div class="t" style="left:1386.8px;top:875.7px;font-size:53.78px;color:#787878;transform:scaleX(0.9393)">1.2</div><div class="t" style="left:1463.1px;top:2431.9px;font-size:54.51px;color:#787878;transform:scaleX(0.8568)">0</div><div class="t" style="left:1917.7px;top:2431.9px;font-size:54.51px;color:#787878;transform:scaleX(1.0429)">5</div><div class="t" style="left:2361.2px;top:2431.9px;font-size:54.51px;color:#787878;transform:scaleX(0.9380)">10</div><div class="t" style="left:2819.7px;top:2431.9px;font-size:54.51px;color:#787878;transform:scaleX(0.9478)">15</div><div class="t" style="left:3276.5px;top:2431.9px;font-size:54.51px;color:#787878;transform:scaleX(0.9277)">20</div><div class="t" style="left:3733.4px;top:2431.9px;font-size:54.51px;color:#787878;transform:scaleX(0.9641)">25</div><div class="t" style="left:1811.7px;top:1449.2px;font-size:54.07px;color:#4a4a4a;transform:scaleX(0.9355)">System: Tuned response</div><div class="t" style="left:1809.3px;top:1508.5px;font-size:53.78px;color:#4a4a4a;transform:scaleX(0.9420)">I/O: In(1) to y</div><div class="t" style="left:1812.9px;top:1568.5px;font-size:53.78px;color:#4a4a4a;transform:scaleX(0.9373)">Time (seconds): 3.33</div><div class="t" style="left:1813.9px;top:1629.4px;font-size:54.51px;color:#4a4a4a;transform:scaleX(0.9224)">Amplitude: 0.792</div><div class="t" style="left:1346.1px;top:1659.8px;font-size:60.32px;color:#303030;transform:translate(-50%,-50%) rotate(-90deg) scaleX(0.9118);transform-origin:50% 50%">Amplitude</div>
</body></html>
